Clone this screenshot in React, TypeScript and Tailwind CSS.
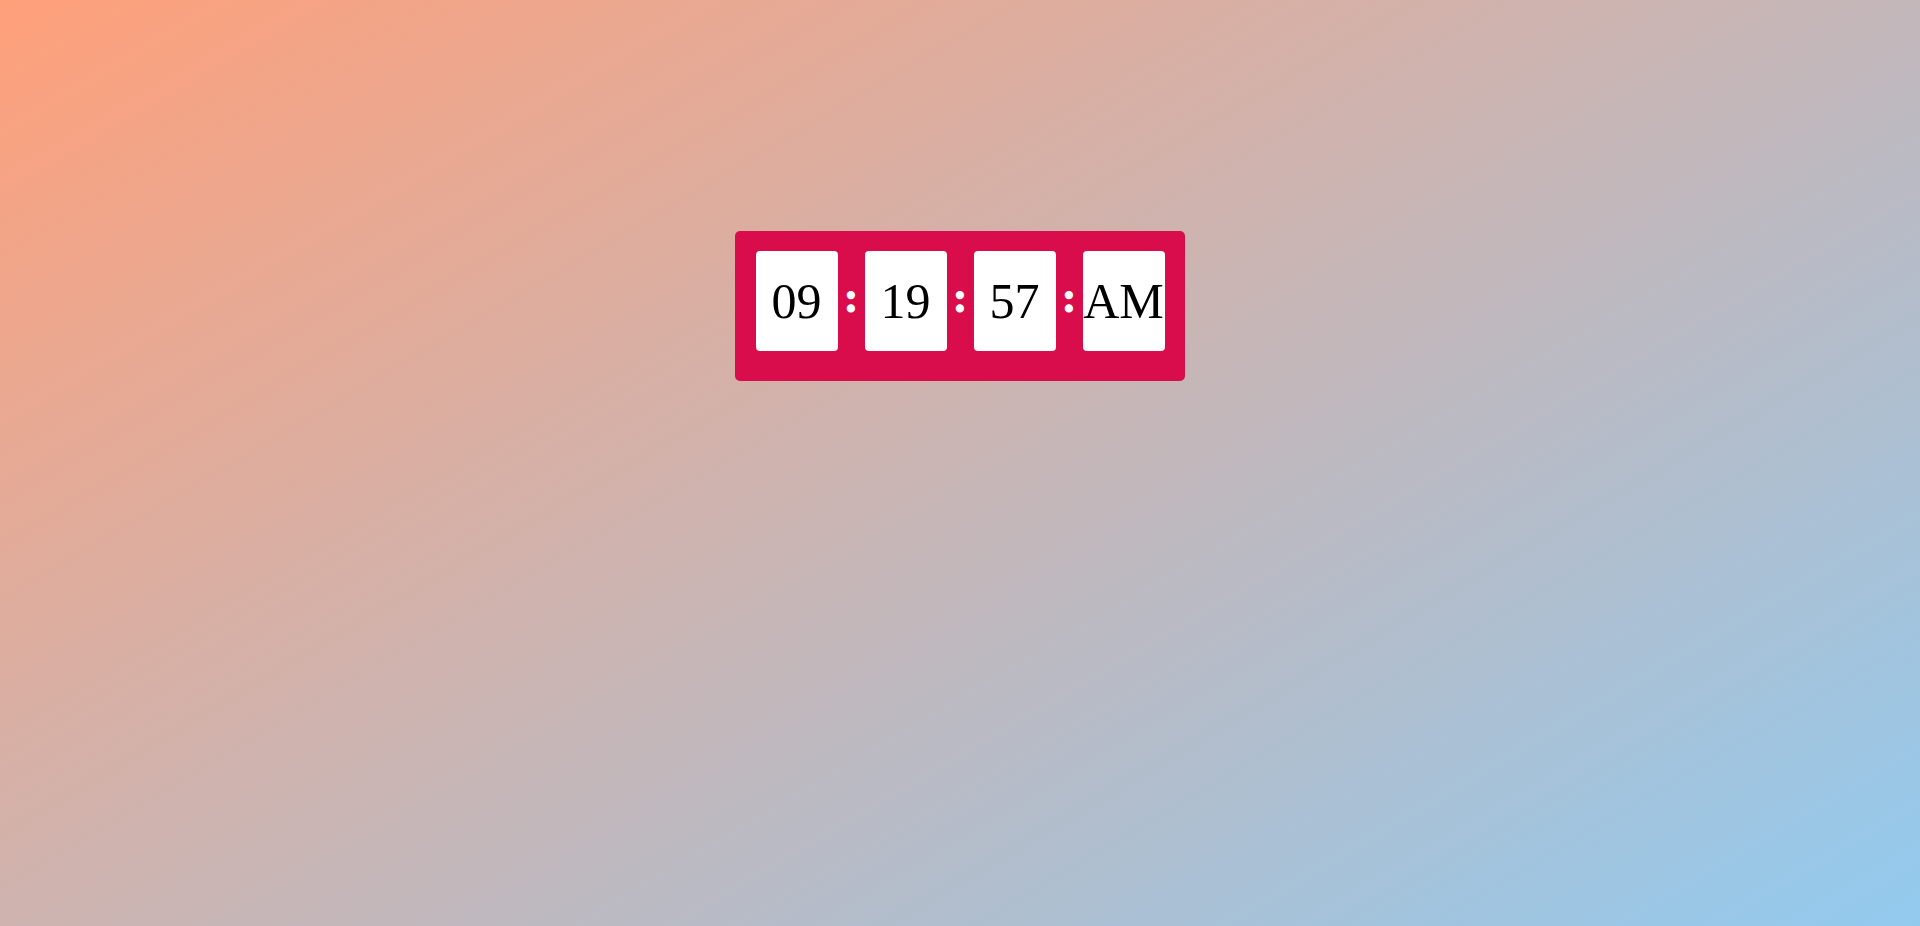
export default function App() {
  const parts = ["09", "19", "57", "AM"];

  return (
    <div className="h-screen w-full overflow-y-scroll">
      <div className="min-h-[1128px] w-full bg-[linear-gradient(to_bottom_right,#ffa07a,#87cefa)] pt-[231px] font-['Liberation_Serif',serif]">
        <div className="mx-auto flex h-[150px] w-[450px] items-start justify-center rounded-[5px] bg-[#d90d4b] pt-[20px]">
          {parts.map((p, i) => (
            <div key={p} className="flex h-[100px] items-center">
              {i > 0 && (
                <span className="w-[27px] pb-[7px] text-center text-[44px] font-bold leading-none text-white [-webkit-text-stroke:1px_white]">
                  :
                </span>
              )}
              <div className="flex h-[100px] w-[82px] items-center justify-center rounded-[4px] bg-white text-[50px] leading-none text-black">
                {p}
              </div>
            </div>
          ))}
        </div>
      </div>
    </div>
  );
}
